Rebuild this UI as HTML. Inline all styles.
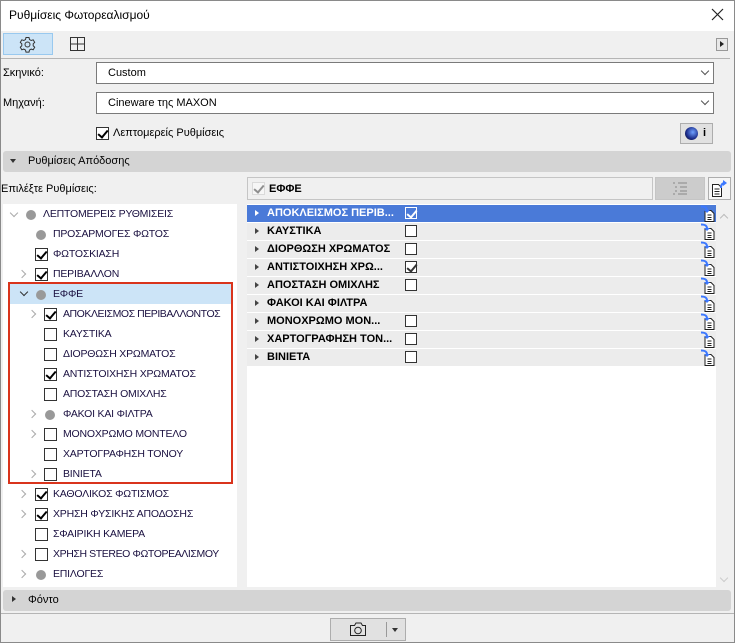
<!DOCTYPE html>
<html><head><meta charset="utf-8"><style>
*{margin:0;padding:0;box-sizing:border-box}
body{width:735px;height:643px;position:relative;background:#f0f0f0;font-family:"Liberation Sans",sans-serif;font-size:11px;color:#000;overflow:hidden}
.a{position:absolute}
.win{left:0;top:0;width:735px;height:643px;border:1px solid #8a8a8a}
.cb{position:absolute;width:13px;height:13px;border:1px solid #333;background:#fff}
.cb.on::after{content:"";position:absolute;left:3px;top:0px;width:4px;height:8px;border:solid #000;border-width:0 2px 2px 0;transform:rotate(40deg)}
.dot{position:absolute;width:10px;height:10px;border-radius:50%;background:#999}
.chev{position:absolute;width:6px;height:6px;border:solid #aaa;border-width:0 1.2px 1.2px 0}
.r{transform:rotate(-45deg)}.d{transform:rotate(45deg)}
.t{position:absolute;color:#1a1040;white-space:nowrap;font-size:10.5px;letter-spacing:-0.2px}
.row{position:absolute;left:247px;width:469px;height:17px;background:#ececec;font-weight:bold;font-size:11px}
.row .tri{position:absolute;left:8px;top:5px;border-left:4px solid #444;border-top:3.5px solid transparent;border-bottom:3.5px solid transparent}
.row .lb{position:absolute;left:20px;top:2px}
.row .cb{left:158px;top:2px;width:12px;height:12px}
.row svg{position:absolute;left:453px;top:0}
</style></head><body>
<div class="a win"></div>
<div class="a" style="left:1px;top:1px;width:733px;height:30px;background:#fff"></div>
<div class="a" style="left:9px;top:8px;font-size:12px">Ρυθμίσεις Φωτορεαλισμού</div>
<svg class="a" style="left:711px;top:8px" width="13" height="13"><path d="M1 1L12 12M12 1L1 12" stroke="#222" stroke-width="1.2"/></svg>
<div class="a" style="left:3px;top:33px;width:50px;height:22px;background:#cce4f7;border:1px solid #99c9ef"></div>
<svg class="a" style="left:19px;top:36px" width="17" height="17" viewBox="0 0 17 17"><circle cx="8.5" cy="8.5" r="2.5" fill="none" stroke="#333"/><path d="M7 1.5h3l.5 2 1.7 1 2-.7 1.5 2.6-1.5 1.4v2l1.5 1.4-1.5 2.6-2-.7-1.7 1-.5 2h-3l-.5-2-1.7-1-2 .7-1.5-2.6 1.5-1.4v-2L1.3 6.4l1.5-2.6 2 .7 1.7-1z" fill="none" stroke="#333"/></svg>
<svg class="a" style="left:69px;top:36px" width="17" height="16"><rect x="1.5" y="1.5" width="14" height="13" fill="none" stroke="#333"/><path d="M8.5 1.5v13M1.5 8h14" stroke="#333"/></svg>
<div class="a" style="left:716px;top:38px;width:12px;height:13px;border:1px solid #999;background:#e8e8e8"></div>
<div class="a" style="left:720px;top:41px;border-left:4px solid #222;border-top:3.5px solid transparent;border-bottom:3.5px solid transparent"></div>
<div class="a" style="left:1px;top:58px;width:729px;height:1px;background:#b5b5b5"></div>
<div class="a" style="left:3px;top:67px">Σκηνικό:</div>
<div class="a" style="left:96px;top:62px;width:618px;height:22px;background:#fff;border:1px solid #7a7a7a"></div>
<div class="a" style="left:108px;top:67px">Custom</div>
<div class="chev d" style="left:702px;top:68px;border-color:#555;border-width:0 1px 1px 0"></div>
<div class="a" style="left:3px;top:97px">Μηχανή:</div>
<div class="a" style="left:96px;top:92px;width:618px;height:22px;background:#fff;border:1px solid #7a7a7a"></div>
<div class="a" style="left:108px;top:97px">Cineware της MAXON</div>
<div class="chev d" style="left:702px;top:98px;border-color:#555;border-width:0 1px 1px 0"></div>
<div class="cb on" style="left:96px;top:127px"></div>
<div class="a" style="left:113px;top:127px">Λεπτομερείς Ρυθμίσεις</div>
<div class="a" style="left:680px;top:123px;width:33px;height:21px;border:1px solid #adadad;background:#e1e1e1"></div>
<div class="a" style="left:685px;top:127px;width:13px;height:13px;border-radius:50%;background:radial-gradient(circle at 60% 40%,#6fa0ff,#1a2a88 60%,#111)"></div>
<div class="a" style="left:703px;top:127px;font-weight:bold">i</div>
<div class="a" style="left:3px;top:151px;width:728px;height:21px;background:#d4d4d4;border-radius:3px"></div>
<div class="a" style="left:10px;top:159px;border-top:4px solid #333;border-left:3.5px solid transparent;border-right:3.5px solid transparent"></div>
<div class="a" style="left:28px;top:155px">Ρυθμίσεις Απόδοσης</div>
<div class="a" style="left:1px;top:183px">Επιλέξτε Ρυθμίσεις:</div>
<div class="a" style="left:247px;top:177px;width:406px;height:23px;background:#f0f0f0;border:1px solid #c5c5c5"></div>
<div class="cb on" style="left:252px;top:182px;border-color:#bbb;opacity:.4"></div>
<div class="a" style="left:269px;top:183px;font-weight:bold">ΕΦΦΕ</div>
<div class="a" style="left:655px;top:177px;width:50px;height:23px;background:#ccc;border:1px solid #c5c5c5"></div>
<svg class="a" style="left:671px;top:181px" width="18" height="15"><path d="M2 2h2M7 2h9M4 6h2M9 6h7M4 10h2M9 10h7M2 13h2M7 13h9" stroke="#aaa" stroke-width="2"/></svg>
<div class="a" style="left:708px;top:177px;width:23px;height:23px;background:#f5f5f5;border:1px solid #adadad"></div>
<svg class="a" style="left:710px;top:179px" width="20" height="19"><path d="M2.5 5.5h6l3 3v9h-9z" fill="#fff" stroke="#222"/><path d="M4.5 10h5M4.5 12.5h5M4.5 15h5" stroke="#222"/><path d="M11 9c0-4 2-5 4-5" stroke="#3c78ff" stroke-width="2" fill="none"/><path d="M13 1l4 3-4 3z" fill="#3c78ff"/></svg>
<div class="a" style="left:3px;top:204px;width:234px;height:383px;background:#fff"></div>
<div class="a" style="left:237px;top:204px;width:10px;height:383px;background:#f0f0f0"></div>
<div class="a" style="left:9px;top:284px;width:224px;height:20px;background:#cce4f7"></div>

<div class="chev d" style="left:11px;top:210px"></div><div class="dot" style="left:26px;top:210px"></div><div class="t" style="left:43px;top:208px">ΛΕΠΤΟΜΕΡΕΙΣ ΡΥΘΜΙΣΕΙΣ</div>
<div class="dot" style="left:36px;top:230px"></div><div class="t" style="left:53px;top:228px">ΠΡΟΣΑΡΜΟΓΕΣ ΦΩΤΟΣ</div>
<div class="cb on" style="left:35px;top:248px"></div><div class="t" style="left:53px;top:248px">ΦΩΤΟΣΚΙΑΣΗ</div>
<div class="chev r" style="left:19px;top:271px"></div><div class="cb on" style="left:35px;top:268px"></div><div class="t" style="left:53px;top:268px">ΠΕΡΙΒΑΛΛΟΝ</div>
<div class="chev d" style="left:21px;top:289px;border-color:#333"></div><div class="dot" style="left:36px;top:290px"></div><div class="t" style="left:53px;top:288px">ΕΦΦΕ</div>
<div class="chev r" style="left:29px;top:311px"></div><div class="cb on" style="left:44px;top:308px"></div><div class="t" style="left:63px;top:308px;letter-spacing:-0.45px">ΑΠΟΚΛΕΙΣΜΟΣ ΠΕΡΙΒΑΛΛΟΝΤΟΣ</div>
<div class="cb" style="left:44px;top:328px"></div><div class="t" style="left:63px;top:328px">ΚΑΥΣΤΙΚΑ</div>
<div class="cb" style="left:44px;top:348px"></div><div class="t" style="left:63px;top:348px">ΔΙΟΡΘΩΣΗ ΧΡΩΜΑΤΟΣ</div>
<div class="cb on" style="left:44px;top:368px"></div><div class="t" style="left:63px;top:368px">ΑΝΤΙΣΤΟΙΧΗΣΗ ΧΡΩΜΑΤΟΣ</div>
<div class="cb" style="left:44px;top:388px"></div><div class="t" style="left:63px;top:388px">ΑΠΟΣΤΑΣΗ ΟΜΙΧΛΗΣ</div>
<div class="chev r" style="left:29px;top:411px"></div><div class="dot" style="left:45px;top:410px"></div><div class="t" style="left:63px;top:408px">ΦΑΚΟΙ ΚΑΙ ΦΙΛΤΡΑ</div>
<div class="chev r" style="left:29px;top:431px"></div><div class="cb" style="left:44px;top:428px"></div><div class="t" style="left:63px;top:428px">ΜΟΝΟΧΡΩΜΟ ΜΟΝΤΕΛΟ</div>
<div class="cb" style="left:44px;top:448px"></div><div class="t" style="left:63px;top:448px">ΧΑΡΤΟΓΡΑΦΗΣΗ ΤΟΝΟΥ</div>
<div class="chev r" style="left:29px;top:471px"></div><div class="cb" style="left:44px;top:468px"></div><div class="t" style="left:63px;top:468px">ΒΙΝΙΕΤΑ</div>
<div class="chev r" style="left:19px;top:491px"></div><div class="cb on" style="left:35px;top:488px"></div><div class="t" style="left:53px;top:488px">ΚΑΘΟΛΙΚΟΣ ΦΩΤΙΣΜΟΣ</div>
<div class="chev r" style="left:19px;top:511px"></div><div class="cb on" style="left:35px;top:508px"></div><div class="t" style="left:53px;top:508px">ΧΡΗΣΗ ΦΥΣΙΚΗΣ ΑΠΟΔΟΣΗΣ</div>
<div class="cb" style="left:35px;top:528px"></div><div class="t" style="left:53px;top:528px">ΣΦΑΙΡΙΚΗ ΚΑΜΕΡΑ</div>
<div class="chev r" style="left:19px;top:551px"></div><div class="cb" style="left:35px;top:548px"></div><div class="t" style="left:53px;top:548px;letter-spacing:-0.4px">ΧΡΗΣΗ STEREO ΦΩΤΟΡΕΑΛΙΣΜΟΥ</div>
<div class="chev r" style="left:19px;top:571px"></div><div class="dot" style="left:36px;top:570px"></div><div class="t" style="left:53px;top:568px">ΕΠΙΛΟΓΕΣ</div>
<div class="a" style="left:8px;top:282px;width:225px;height:202px;border:2px solid #d9341c"></div>
<div class="a" style="left:247px;top:204px;width:469px;height:383px;background:#fff"></div>
<div class="a" style="left:716px;top:204px;width:15px;height:383px;background:#f0f0f0"></div>
<div class="chev" style="left:721px;top:215px;transform:rotate(-135deg);border-color:#bbb"></div>
<div class="chev d" style="left:721px;top:575px;border-color:#ccc;border-width:0 1px 1px 0"></div>
<div id="rows"></div>
<script>
var L=[["ΑΠΟΚΛΕΙΣΜΟΣ ΠΕΡΙΒ...",1],["ΚΑΥΣΤΙΚΑ",0],["ΔΙΟΡΘΩΣΗ ΧΡΩΜΑΤΟΣ",0],["ΑΝΤΙΣΤΟΙΧΗΣΗ ΧΡΩ...",1],["ΑΠΟΣΤΑΣΗ ΟΜΙΧΛΗΣ",0],["ΦΑΚΟΙ ΚΑΙ ΦΙΛΤΡΑ",-1],["ΜΟΝΟΧΡΩΜΟ ΜΟΝ...",0],["ΧΑΡΤΟΓΡΑΦΗΣΗ ΤΟΝ...",0],["ΒΙΝΙΕΤΑ",0]];
var h="";L.forEach(function(r,i){var s=i==0;h+='<div class="row" style="top:'+(205+i*18)+'px;'+(s?'background:#4a7ad8;color:#fff':'')+'"><div class="tri" style="'+(s?'border-left-color:#fff':'')+'"></div><div class="lb">'+r[0]+'</div>'+(r[1]>=0?'<div class="cb'+(r[1]?' on':'')+'" style="'+(s?'border-color:#fff;background:#4a7ad8':'')+'"></div>':'')+'<svg width="16" height="17"><path d="M5 5.5h6l3 3v8H5z" fill="#fff" stroke="#222"/><path d="M7.5 10h4M7.5 12.5h4M7.5 14.5h4" stroke="#222"/><path d="M1 1.5c4 0 6 1 6 4" stroke="#3c78ff" stroke-width="2" fill="none"/><path d="M4 5h6l-3 3z" fill="#3c78ff"/></svg></div>';});
document.getElementById("rows").innerHTML=h;
</script>
<style>.row .cb.on::after{border-color:inherit}</style>
<div class="a" style="left:3px;top:590px;width:728px;height:21px;background:#d4d4d4;border-radius:3px"></div>
<div class="a" style="left:12px;top:596px;border-left:4px solid #333;border-top:3.5px solid transparent;border-bottom:3.5px solid transparent"></div>
<div class="a" style="left:28px;top:594px">Φόντο</div>
<div class="a" style="left:1px;top:613px;width:733px;height:1px;background:#b5b5b5"></div>
<div class="a" style="left:330px;top:618px;width:76px;height:23px;background:#e1e1e1;border:1px solid #adadad"></div>
<div class="a" style="left:386px;top:622px;width:1px;height:15px;background:#999"></div>
<svg class="a" style="left:348px;top:620px" width="20" height="18"><path d="M2.5 5.5h4l1.5-2.5h5l1.5 2.5h3v10h-15z" fill="none" stroke="#222"/><circle cx="10" cy="10.5" r="3.3" fill="none" stroke="#222"/></svg>
<div class="a" style="left:392px;top:628px;border-top:4px solid #333;border-left:3.5px solid transparent;border-right:3.5px solid transparent"></div>
</body></html>
